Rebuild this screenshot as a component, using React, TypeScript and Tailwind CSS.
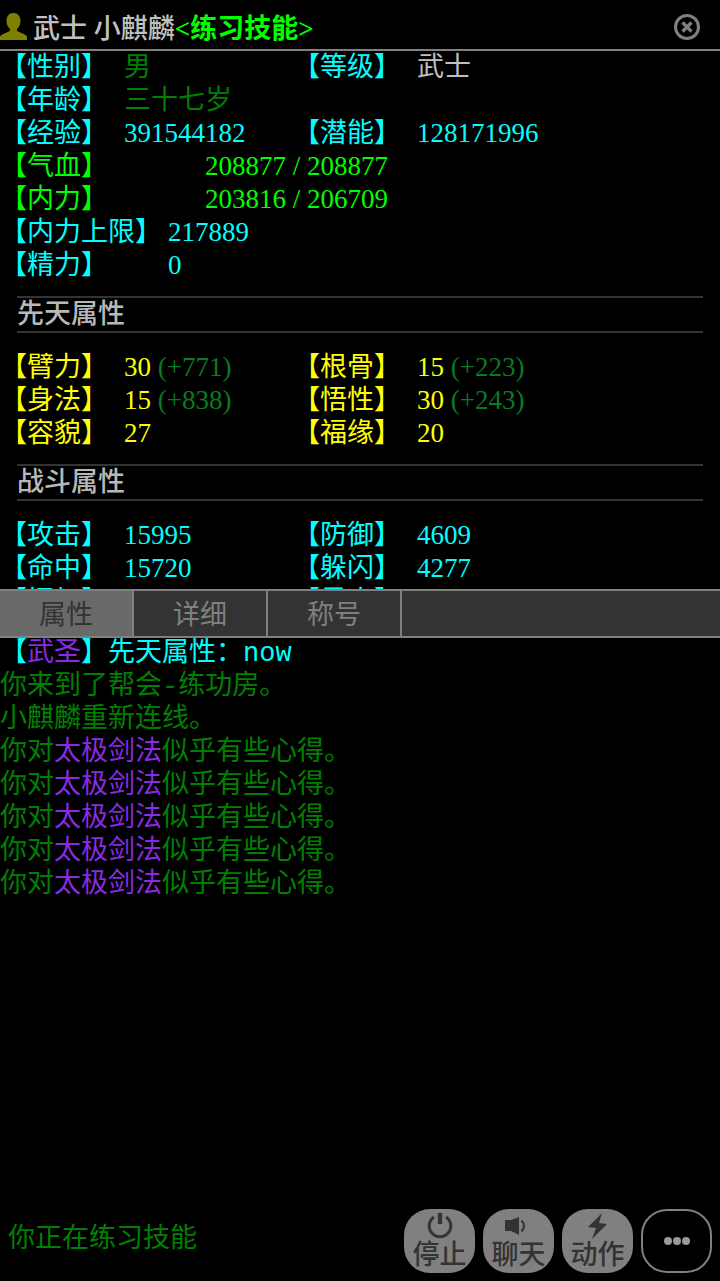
import type { ReactNode } from "react";

type Stat = { label: string; value: string; bonus?: string; tone?: string };

const INNATE: Stat[] = [
  { label: "臂力", value: "30", bonus: "(+771)" },
  { label: "根骨", value: "15", bonus: "(+223)" },
  { label: "身法", value: "15", bonus: "(+838)" },
  { label: "悟性", value: "30", bonus: "(+243)" },
  { label: "容貌", value: "27" },
  { label: "福缘", value: "20" }
];

const COMBAT: Stat[] = [
  { label: "攻击", value: "15995" },
  { label: "防御", value: "4609" },
  { label: "命中", value: "15720" },
  { label: "躲闪", value: "4277" },
  { label: "招架", value: "15720" },
  { label: "暴击", value: "0" }
];

const TABS = ["属性", "详细", "称号"];

function StatCell({ label, value, bonus, tone }: Stat) {
  return (
    <div className="flex">
      <dt className="w-[124px] shrink-0">【{label}】</dt>
      <dd className={tone}>
        {value}
        {bonus ? <span className="text-[#0b7a20]"> {bonus}</span> : null}
      </dd>
    </div>
  );
}

function StatGrid({ stats }: { stats: Stat[] }) {
  return (
    <dl className="grid grid-cols-[293px_1fr]">
      {stats.map((stat) => (
        <StatCell key={stat.label} {...stat} />
      ))}
    </dl>
  );
}

function SectionTitle({ children }: { children: ReactNode }) {
  return (
    <h2 className="mx-[17px] mt-[14px] mb-[18px] border-y-2 border-[#333] font-medium text-[#b8b8b8]">
      {children}
    </h2>
  );
}

function ActionButton({ label, children }: { label: string; children: ReactNode }) {
  return (
    <button
      type="button"
      className="flex h-16 w-[71px] flex-col items-center rounded-[26px] bg-[#808080] pt-1 font-medium text-[#333]"
    >
      <svg viewBox="0 0 28 26" className="h-[26px] w-7 shrink-0" aria-hidden="true">
        {children}
      </svg>
      <span className="leading-8">{label}</span>
    </button>
  );
}

export default function App() {
  return (
    <div className="flex h-screen flex-col overflow-hidden bg-black font-['Liberation_Serif','Noto_Sans_CJK_SC',serif] text-[27px] leading-[33px] text-[#008000]">
      <header className="flex h-[51px] shrink-0 items-center border-b-2 border-[#808080] pt-1">
        <svg viewBox="0 0 27 27" className="mr-1.5 size-[27px] shrink-0 fill-[#808000]" aria-hidden="true">
          <path d="M13.500 0C9 0 6.500 3.500 6.500 8c0 3.500 1.500 6.500 3.500 8v2C7 19.500 0 21.500 0 24v3h27v-3c0-2.500-7-4.500-10-6v-2c2-1.500 3.500-4.500 3.500-8C20.500 3.500 18 0 13.500 0z" />
        </svg>
        <h1 className="flex-1 pt-1.5 font-medium text-[#c0c0c0]">
          武士 小麒麟<span className="font-bold text-[#00ff00]">&lt;练习技能&gt;</span>
        </h1>
        <button type="button" aria-label="关闭" className="mr-5">
          <svg viewBox="0 0 26 26" className="size-[26px] fill-none stroke-[#808080]" aria-hidden="true">
            <circle cx="13" cy="13" r="11.500" strokeWidth="3" />
            <path d="M8.500 8.500l9 9M17.500 8.500l-9 9" strokeWidth="3.200" />
          </svg>
        </button>
      </header>

      <main className="h-[42vh] shrink-0 overflow-hidden text-[#00ffff]">
        <StatGrid
          stats={[
            { label: "性别", value: "男", tone: "text-[#008000]" },
            { label: "等级", value: "武士", tone: "text-[#c0c0c0]" }
          ]}
        />
        <dl>
          <StatCell label="年龄" value="三十七岁" tone="text-[#008000]" />
        </dl>
        <StatGrid
          stats={[
            { label: "经验", value: "391544182" },
            { label: "潜能", value: "128171996" }
          ]}
        />
        <dl className="grid grid-cols-[205px_1fr] text-[#00ff00]">
          <dt>【气血】</dt>
          <dd>208877 / 208877</dd>
          <dt>【内力】</dt>
          <dd>203816 / 206709</dd>
        </dl>
        <dl className="grid grid-cols-[168px_1fr]">
          <dt>【内力上限】</dt>
          <dd>217889</dd>
          <dt>【精力】</dt>
          <dd>0</dd>
        </dl>

        <SectionTitle>先天属性</SectionTitle>
        <div className="text-[#ffff00]">
          <StatGrid stats={INNATE} />
        </div>
        <SectionTitle>战斗属性</SectionTitle>
        <StatGrid stats={COMBAT} />
      </main>

      <nav className="flex h-[49px] shrink-0 border-y-2 border-[#808080] bg-[#333]">
        {TABS.map((tab, index) => (
          <button
            key={tab}
            type="button"
            aria-current={index === 0}
            className="w-[134px] border-r-2 border-[#808080] pt-1 text-[#808080] aria-[current=true]:bg-[#696969] aria-[current=true]:text-[#333]"
          >
            {tab}
          </button>
        ))}
      </nav>

      <section className="flex-1 overflow-hidden font-['Liberation_Mono','Noto_Sans_CJK_SC',monospace]">
        <p className="text-[#00ffff]">
          【<span className="text-[#8a2be2]">武圣</span>】先天属性：now
        </p>
        <p>你来到了帮会-练功房。</p>
        <p>小麒麟重新连线。</p>
        {Array.from({ length: 5 }, (_, index) => (
          <p key={index}>
            你对<span className="text-[#8a2be2]">太极剑法</span>似乎有些心得。
          </p>
        ))}
      </section>

      <footer className="flex shrink-0 items-center px-2 pb-2">
        <p className="flex-1 pb-1.5">你正在练习技能</p>
        <div className="flex gap-2">
          <ActionButton label="停止">
            <path d="M8 4a10.800 10.800 0 1 0 12 0" fill="none" stroke="currentColor" strokeWidth="3" />
            <path d="M14 0v11" stroke="currentColor" strokeWidth="4.400" />
          </ActionButton>
          <ActionButton label="聊天">
            <path d="M0 7h6l8-3v18l-8-4H0z" fill="currentColor" />
            <path d="M16.500 7.500q5 5.500 0 11" fill="none" stroke="currentColor" strokeWidth="2" />
          </ActionButton>
          <ActionButton label="动作">
            <path d="M18 0L4 14l8 1L8 26l15-15-8-1z" fill="currentColor" />
          </ActionButton>
          <button
            type="button"
            aria-label="更多"
            className="flex h-16 w-[71px] items-center justify-center rounded-[26px] border-2 border-[#808080]"
          >
            <svg viewBox="0 0 26 8" className="h-2 w-[26px] fill-[#999]" aria-hidden="true">
              <circle cx="4" cy="4" r="4" />
              <circle cx="13" cy="4" r="4" />
              <circle cx="22" cy="4" r="4" />
            </svg>
          </button>
        </div>
      </footer>
    </div>
  );
}
